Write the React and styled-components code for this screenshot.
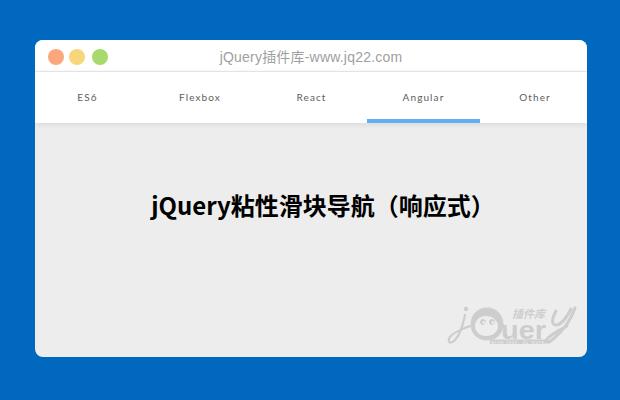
import React from "react";
import styled, { createGlobalStyle } from "styled-components";

const Global = createGlobalStyle`
  html, body { margin: 0; padding: 0; width: 620px; height: 400px; overflow: hidden; background: #0068bf; }
  #root { width: 620px; height: 400px; }
`;

const Page = styled.div`
  width: 620px;
  height: 400px;
  box-sizing: border-box;
  padding: 40px 33px 43px 35px;
  background: #0068bf;
`;

const Card = styled.div`
  position: relative;
  height: 317px;
  display: flex;
  flex-direction: column;
  border-radius: 8px;
  overflow: hidden;
  background: #ededed;
`;

const TitleBar = styled.div`
  position: relative;
  flex: 0 0 31px;
  display: flex;
  align-items: center;
  justify-content: center;
  background: #fff;
  border-bottom: 1px solid #ebebeb;
`;

const Lights = styled.div`
  position: absolute;
  left: 13px;
  top: 9px;
  display: flex;
`;

const Light = styled.span`
  width: 16px;
  height: 16px;
  margin-right: ${(p) => p.$gap}px;
  border-radius: 50%;
  background: ${(p) => p.$color};
`;

const WindowTitle = styled.div`
  font: 14px "Liberation Sans", "Noto Sans CJK SC", sans-serif;
  letter-spacing: 0.2px;
  color: #a0a0a0;
`;

const Nav = styled.nav`
  position: relative;
  z-index: 1;
  flex: 0 0 51px;
  display: grid;
  grid-template-columns: 105px 120px 107px 113px 107px;
  background: #fff;
  box-shadow: 0 1px 6px rgba(0, 0, 0, 0.1);
`;

const Tab = styled.a`
  display: flex;
  align-items: center;
  justify-content: center;
  box-sizing: border-box;
  padding: 3px ${(p) => p.$right || 0}px 0 ${(p) => p.$left || 0}px;
  font: 400 10px Lato, sans-serif;
  letter-spacing: 1.1px;
  color: #5c5c5c;
  opacity: 0.99;
  border-bottom: 4px solid ${(p) => (p.$active ? "#62aef2" : "transparent")};
`;

const Main = styled.main`
  flex: 1;
  display: flex;
  justify-content: center;
  padding: 64px 0 0 24px;
`;

const Heading = styled.h1`
  margin: 0;
  font: 700 24px/36px "Noto Sans CJK SC", sans-serif;
  color: #000;
`;

const Logo = styled.svg`
  position: absolute;
  right: 10px;
  bottom: 11px;
`;

const tabs = [
  { label: "ES6" },
  { label: "Flexbox" },
  { label: "React", right: 4 },
  { label: "Angular", active: true },
  { label: "Other", left: 3 },
];
const lights = [
  { color: "#fba77b", gap: 5 },
  { color: "#f8d67c", gap: 7 },
  { color: "#a8d96c", gap: 0 },
];

export default function App() {
  return (
    <>
      <Global />
      <Page>
        <Card>
          <TitleBar>
            <Lights>
              {lights.map((l) => (
                <Light key={l.color} $color={l.color} $gap={l.gap} />
              ))}
            </Lights>
            <WindowTitle>jQuery插件库-www.jq22.com</WindowTitle>
          </TitleBar>
          <Nav>
            {tabs.map((t) => (
              <Tab key={t.label} $active={t.active} $left={t.left} $right={t.right}>
                {t.label}
              </Tab>
            ))}
          </Nav>
          <Main>
            <Heading>jQuery粘性滑块导航（响应式）</Heading>
          </Main>
          <Logo width="130" height="42" viewBox="447 305 130 42">
            <g fill="none" stroke="#cdcdcd" strokeLinecap="round">
              <path d="M465 316 C463 326 460 336 455 341 C451 345 448 344 449 340 C450 335 459 331 470 327" strokeWidth="2.2" />
              <path d="M575 309 C571 321 563 332 552 341 C547 345 544 343 548 339 C553 334 560 331 567 327" strokeWidth="3" />
              <path d="M556 312 C552 319 551 326 556 326 C561 326 567 318 571 310" strokeWidth="3" />
              <circle cx="487" cy="325" r="16.4" strokeWidth="0.9" strokeDasharray="1.4 1.2" strokeLinecap="butt" />
            </g>
            <g fill="#cdcdcd">
              <circle cx="466" cy="310" r="2.2" />
              <path fillRule="evenodd" d="M487 309 C497 309 503 316 503 325 C503 335 497 341 487 341 C477 341 471 335 471 325 C471 316 477 309 487 309 Z M486 317 C479 317 475 322 475 327 C475 333 480 337 486 337 C493 337 498 333 498 327 C498 322 493 317 486 317 Z" />
              <path fillRule="evenodd" d="M483 320 a3 3 0 1 0 0.01 0 Z M484 322 a1.5 1.5 0 1 1 -0.01 0 Z" />
              <path fillRule="evenodd" d="M492 320 a3 3 0 1 0 0.01 0 Z M493 322 a1.5 1.5 0 1 1 -0.01 0 Z" />
              <text x="501" y="339.5" fontFamily="Liberation Sans, sans-serif" fontWeight="700" fontSize="26" textLength="45" lengthAdjust="spacingAndGlyphs">uer</text>
              <text x="512" y="318.5" fontFamily="Noto Sans CJK SC, sans-serif" fontSize="11" fontStyle="italic" fontWeight="700" textLength="33">插件库</text>
              <rect x="490" y="340.5" width="55" height="4.5" />
            </g>
            <text x="491" y="344.5" fill="#ededed" fontFamily="Liberation Sans, sans-serif" fontSize="4.5" textLength="53">write less, do more</text>
          </Logo>
        </Card>
      </Page>
    </>
  );
}
